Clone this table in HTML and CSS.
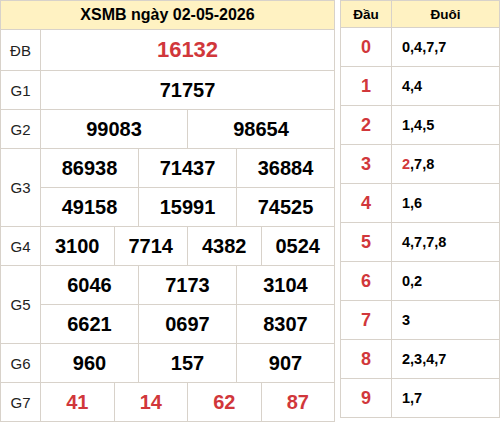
FILE: index.html
```html
<!DOCTYPE html>
<html lang="vi">
<head>
  <meta charset="UTF-8">
  <title>XSMB ngày 02-05-2026</title>
  <link rel="stylesheet" href="styles.css">
</head>
<body>
  <div class="wrap">
    <!-- Bảng kết quả -->
    <table class="kq">
      <colgroup>
        <col class="col-label">
        <col span="12">
      </colgroup>
      <tr class="head">
        <th colspan="13">XSMB ngày 02-05-2026</th>
      </tr>
      <tr class="row-db">
        <td class="label">ĐB</td>
        <td colspan="12" class="num big red">16132</td>
      </tr>
      <tr>
        <td class="label">G1</td>
        <td colspan="12" class="num">71757</td>
      </tr>
      <tr>
        <td class="label">G2</td>
        <td colspan="6" class="num">99083</td>
        <td colspan="6" class="num">98654</td>
      </tr>
      <tr>
        <td class="label" rowspan="2">G3</td>
        <td colspan="4" class="num">86938</td>
        <td colspan="4" class="num">71437</td>
        <td colspan="4" class="num">36884</td>
      </tr>
      <tr>
        <td colspan="4" class="num">49158</td>
        <td colspan="4" class="num">15991</td>
        <td colspan="4" class="num">74525</td>
      </tr>
      <tr>
        <td class="label">G4</td>
        <td colspan="3" class="num">3100</td>
        <td colspan="3" class="num">7714</td>
        <td colspan="3" class="num">4382</td>
        <td colspan="3" class="num">0524</td>
      </tr>
      <tr>
        <td class="label" rowspan="2">G5</td>
        <td colspan="4" class="num">6046</td>
        <td colspan="4" class="num">7173</td>
        <td colspan="4" class="num">3104</td>
      </tr>
      <tr>
        <td colspan="4" class="num">6621</td>
        <td colspan="4" class="num">0697</td>
        <td colspan="4" class="num">8307</td>
      </tr>
      <tr>
        <td class="label">G6</td>
        <td colspan="4" class="num">960</td>
        <td colspan="4" class="num">157</td>
        <td colspan="4" class="num">907</td>
      </tr>
      <tr>
        <td class="label">G7</td>
        <td colspan="3" class="num red">41</td>
        <td colspan="3" class="num red">14</td>
        <td colspan="3" class="num red">62</td>
        <td colspan="3" class="num red">87</td>
      </tr>
    </table>

    <!-- Bảng lô tô đầu / đuôi -->
    <table class="loto">
      <tr class="head">
        <th class="dau">Đầu</th>
        <th>Đuôi</th>
      </tr>
      <tr><td class="dau">0</td><td class="duoi">0,4,7,7</td></tr>
      <tr><td class="dau">1</td><td class="duoi">4,4</td></tr>
      <tr><td class="dau">2</td><td class="duoi">1,4,5</td></tr>
      <tr><td class="dau">3</td><td class="duoi"><span class="red">2</span>,7,8</td></tr>
      <tr><td class="dau">4</td><td class="duoi">1,6</td></tr>
      <tr><td class="dau">5</td><td class="duoi">4,7,7,8</td></tr>
      <tr><td class="dau">6</td><td class="duoi">0,2</td></tr>
      <tr><td class="dau">7</td><td class="duoi">3</td></tr>
      <tr><td class="dau">8</td><td class="duoi">2,3,4,7</td></tr>
      <tr><td class="dau">9</td><td class="duoi">1,7</td></tr>
    </table>
  </div>
</body>
</html>
```

FILE: styles.css
```css
body {
  margin: 0;
  font-family: "Liberation Sans", Arial, sans-serif;
  color: #000;
  background: #fff;
}
.wrap {
  display: flex;
  align-items: flex-start;
  gap: 5px;
}
table {
  border-collapse: collapse;
  table-layout: fixed;
}
th, td {
  border: 1px solid #d8d2ca;
  padding: 0;
  text-align: center;
}
.head th {
  background-color: #fff2c2;
  font-weight: bold;
}

/* Bảng kết quả */
.kq {
  width: 335px;
}
.kq .col-label {
  width: 40px;
}
.kq .head th {
  height: 28px;
  font-size: 16px;
}
.kq td {
  height: 38px;
}
.kq .row-db td {
  height: 40px;
}
.label {
  font-size: 15px;
  color: #222;
}
.num {
  font-size: 20px;
  font-weight: bold;
}
.num.big {
  font-size: 22px;
}
.red {
  color: #d1373b;
}

/* Bảng lô tô */
.loto {
  width: 160px;
}
.loto .dau {
  width: 50px;
}
.loto .head th {
  height: 26px;
  font-size: 13.5px;
}
.loto td {
  height: 38px;
}
.loto td.dau {
  font-size: 18px;
  font-weight: bold;
  color: #d1373b;
}
.loto td.duoi {
  text-align: left;
  padding-left: 10px;
  font-size: 14.5px;
  font-weight: bold;
}
```
